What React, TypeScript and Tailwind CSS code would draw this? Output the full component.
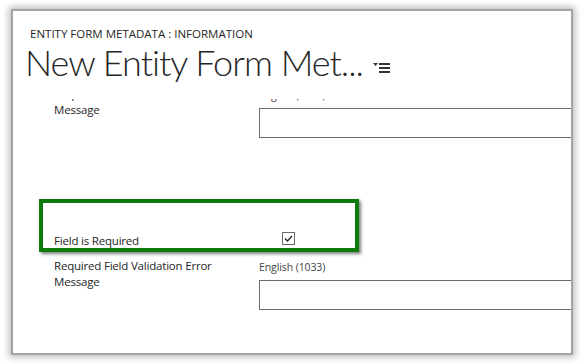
import React from "react";

const font = { fontFamily: '"Open Sans", "Noto Sans", sans-serif' };
const lightFont = { fontFamily: 'Lato, "Open Sans", sans-serif' };

function MenuIcon() {
  return (
    <svg width="18" height="11" viewBox="0 0 18 11" className="block">
      <polygon points="0,0 5,0 2.5,3" fill="#333" />
      <rect x="6" y="0" width="11" height="2" fill="#333" />
      <rect x="6" y="4" width="11" height="2" fill="#333" />
      <rect x="6" y="8" width="11" height="2" fill="#333" />
    </svg>
  );
}

function LocalizedRow() {
  return (
    <div className="flex h-[54px]">
      <div className="w-[205px] shrink-0 text-[11.5px] leading-[16px] tracking-[-0.2px] text-[#262626]">
        <div>Required Field Validation Error</div>
        <div>Message</div>
      </div>
      <div className="flex-1 flex flex-col">
        <div className="mt-[3px] h-[13px] text-[10.5px] leading-[13px] tracking-[-0.1px] text-[#444]">English (1033)</div>
        <div className="mt-[6px] h-[30px] w-[340px] border border-[#6d6d6d] bg-white" />
      </div>
    </div>
  );
}

export default function App() {
  return (
    <div className="w-[584px] h-[364px] bg-white pt-[11px] pl-[13px]" style={font}>
      <div className="relative w-[558px] h-[342px] bg-white overflow-hidden shadow-[0_0_0_2px_#a3a3a3,0_0_7px_4px_rgba(0,0,0,0.28)] flex flex-col">
        <div className="h-[88px] shrink-0 pt-[15px]">
          <div className="pl-[17px] text-[11.5px] leading-[16px] text-[#262626]">ENTITY FORM METADATA : INFORMATION</div>
          <div className="mt-[2px] pl-[12px] flex items-start">
            <span className="text-[36px] leading-[36px] font-light tracking-[-1px] text-[#262626]" style={lightFont}>New Entity Form Met...</span>
            <span className="ml-[10px] mt-[19px]"><MenuIcon /></span>
          </div>
        </div>
        <div className="flex-1 overflow-hidden pl-[41px]">
          <div className="-mt-[13px]">
            <LocalizedRow />
            <div className="mt-[92px] h-[26px] flex">
              <div className="w-[228px] shrink-0 mt-[1px] text-[11.5px] leading-[16px] tracking-[-0.2px] text-[#262626]">Field is Required</div>
              <div className="w-[13px] h-[13px] border border-[#6a6a6a] flex items-center justify-center">
                <svg width="11" height="11" viewBox="0 0 11 11">
                  <polyline points="2,5.5 4.5,8 9,3" fill="none" stroke="#222" strokeWidth="1.3" />
                </svg>
              </div>
            </div>
            <LocalizedRow />
          </div>
        </div>
        <div className="absolute left-[26px] top-[188px] w-[320px] h-[53px] border-4 border-[#0c7a0c] shadow-[2px_2px_3px_rgba(0,0,0,0.5)]" />
      </div>
    </div>
  );
}
